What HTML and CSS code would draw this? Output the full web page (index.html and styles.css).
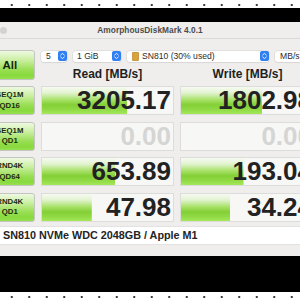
FILE: index.html
```html
<!DOCTYPE html>
<html>
<head>
<meta charset="utf-8">
<link rel="stylesheet" href="styles.css">
</head>
<body>
<div class="screen">
  <div class="strip"></div>
  <div class="bezel top"></div>
  <div class="window">
    <div class="titlebar">
      <span class="light"></span>
      <span class="title">AmorphousDiskMark 4.0.1</span>
    </div>
    <div class="main">
      <div class="grid">
        <div class="btn all">All</div>
        <div class="controls">
          <div class="select s-count"><span>5</span><svg class="stepper" viewBox="0 0 9 10"><rect width="9" height="10" rx="2" fill="#2e7ef4"/><path d="M2.7 4 L4.5 2.4 L6.3 4 M2.7 6 L4.5 7.6 L6.3 6" fill="none" stroke="#fff" stroke-width="0.9" stroke-linecap="round" stroke-linejoin="round"/></svg></div>
          <div class="select s-size"><span>1 GiB</span><svg class="stepper" viewBox="0 0 9 10"><rect width="9" height="10" rx="2" fill="#2e7ef4"/><path d="M2.7 4 L4.5 2.4 L6.3 4 M2.7 6 L4.5 7.6 L6.3 6" fill="none" stroke="#fff" stroke-width="0.9" stroke-linecap="round" stroke-linejoin="round"/></svg></div>
          <div class="select s-disk"><svg class="disk" viewBox="0 0 7 9"><rect x="0.3" y="0.3" width="6.4" height="8.4" rx="1" fill="#d9a23a" stroke="#a8741c" stroke-width="0.6"/></svg><span>SN810 (30% used)</span><svg class="stepper" viewBox="0 0 9 10"><rect width="9" height="10" rx="2" fill="#2e7ef4"/><path d="M2.7 4 L4.5 2.4 L6.3 4 M2.7 6 L4.5 7.6 L6.3 6" fill="none" stroke="#fff" stroke-width="0.9" stroke-linecap="round" stroke-linejoin="round"/></svg></div>
          <div class="select s-unit"><span>MB/s</span></div>
        </div>
        <div class="colhead">Read [MB/s]</div>
        <div class="colhead">Write [MB/s]</div>

        <div class="btn">SEQ1M<br>QD16</div>
        <div class="cell" style="--w:65%">3205.17</div>
        <div class="cell" style="--w:61%">1802.98</div>

        <div class="btn">SEQ1M<br>QD1</div>
        <div class="cell zero">0.00</div>
        <div class="cell zero">0.00</div>

        <div class="btn">RND4K<br>QD64</div>
        <div class="cell" style="--w:56%">653.89</div>
        <div class="cell" style="--w:47%">193.04</div>

        <div class="btn">RND4K<br>QD1</div>
        <div class="cell" style="--w:38%">47.98</div>
        <div class="cell" style="--w:37%">34.24</div>
      </div>
    </div>
    <div class="status">SN810 NVMe WDC 2048GB / Apple M1</div>
  </div>
  <div class="bezel bottom"></div>
  <div class="strip"></div>
</div>
</body>
</html>
```
FILE: styles.css
```css
html, body {
  margin: 0;
  padding: 0;
  background: #ffffff;
  overflow: hidden;
}

.screen {
  width: 300px;
  height: 300px;
  overflow: hidden;
  display: flex;
  flex-direction: column;
  font-family: "Liberation Sans", Arial, sans-serif;
}

.strip {
  height: 8px;
  flex: none;
  background-color: #ffffff;
  background-image: radial-gradient(circle, #3a3a3a 0.7px, transparent 1px);
  background-size: 17.5px 8px;
  background-position: 3px 1px;
}

.bezel {
  background: #000000;
  flex: none;
}
.bezel.top { height: 14px; }
.bezel.bottom { height: 36px; }

.window {
  height: 234px;
  flex: none;
  background: #efeeec;
  display: flex;
  flex-direction: column;
  overflow: hidden;
}

.titlebar {
  position: relative;
  height: 16px;
  border-bottom: 1px solid #dadad8;
  display: flex;
  align-items: center;
  justify-content: center;
  flex: none;
}

.light {
  position: absolute;
  left: -0.5px;
  top: 5px;
  width: 7px;
  height: 7px;
  border-radius: 50%;
  background: #d3d2d0;
}

.title {
  font-size: 8.3px;
  font-weight: bold;
  color: #4c4c4c;
  letter-spacing: 0.05px;
}

.main {
  padding-top: 11px;
  flex: none;
}

.grid {
  display: grid;
  margin-left: -15.5px;
  grid-template-columns: 50.5px 133px 135px;
  grid-template-rows: 12px 11px repeat(4, 29px);
  column-gap: 6px;
  row-gap: 6.5px;
}

.btn {
  box-sizing: border-box;
  border: 1px solid #c3c5c0;
  border-radius: 3px;
  background: linear-gradient(to bottom, #eef9e2 0%, #cdf0a6 30%, #98de52 68%, #88d93e 88%, #95e04e 100%);
  color: #1d2b12;
  font-size: 7.8px;
  font-weight: bold;
  line-height: 10.5px;
  text-align: center;
  display: flex;
  align-items: center;
  justify-content: center;
  white-space: nowrap;
}

.btn.all {
  grid-row: 1 / 3;
  font-size: 11.5px;
  color: #17240c;
}

.controls {
  grid-column: 2 / 4;
  grid-row: 1;
  display: flex;
  gap: 6px;
  align-items: center;
}

.select {
  box-sizing: border-box;
  height: 11px;
  background: #ffffff;
  border-radius: 3px;
  box-shadow: 0 0 0 0.5px #d4d4d2, 0 0.5px 1px rgba(0, 0, 0, 0.08);
  display: flex;
  align-items: center;
  font-size: 8.6px;
  color: #2c2c2c;
  padding-left: 5px;
  flex: none;
}

.stepper {
  width: 9px;
  height: 10px;
  margin-left: auto;
  margin-right: 0.5px;
}

.s-count { width: 26px; }
.s-size { width: 48px; padding-left: 4px; }
.s-disk { width: 142px; }
.s-unit { width: 40px; }

.disk {
  width: 7px;
  height: 9px;
  margin-right: 3px;
}

.colhead {
  grid-row: 2;
  font-size: 12px;
  font-weight: bold;
  color: #1e1e1e;
  text-align: center;
  line-height: 11px;
  white-space: nowrap;
}

.cell {
  box-sizing: border-box;
  border: 1px solid #dcdcda;
  background-color: #f7f7f6;
  background-image: linear-gradient(to bottom, #f6faf1 0%, #e2f3d0 22%, #a6e166 48%, #84cf36 66%, #8fd843 82%, #a3e85a 100%);
  background-size: var(--w, 0%) 100%;
  background-repeat: no-repeat;
  font-size: 26px;
  font-weight: bold;
  color: #222222;
  text-align: right;
  line-height: 27px;
  padding-right: 2px;
  white-space: nowrap;
  overflow: hidden;
}

.cell.zero {
  color: #d5d5d4;
}

.status {
  margin-top: 4.5px;
  height: 17px;
  background: #ffffff;
  border-top: 0.5px solid #e2e2e0;
  border-bottom: 0.5px solid #e2e2e0;
  font-size: 10.8px;
  font-weight: bold;
  color: #242424;
  line-height: 17px;
  padding-left: 3px;
  white-space: nowrap;
  flex: none;
}
```
